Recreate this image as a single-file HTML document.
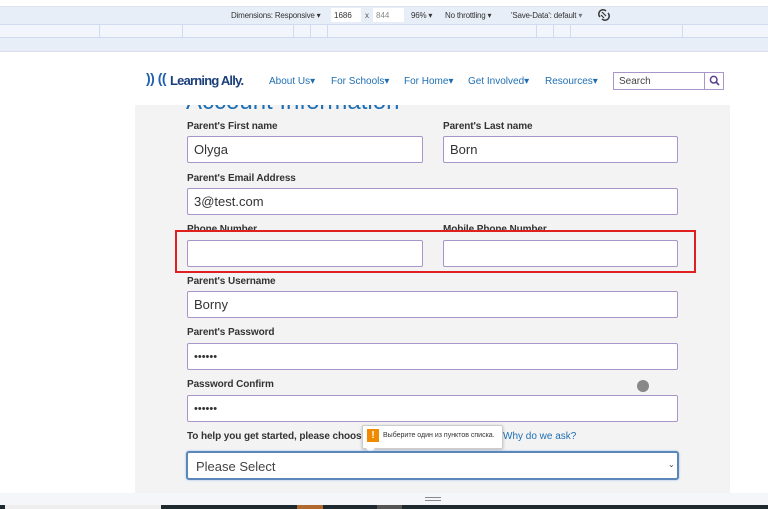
<!DOCTYPE html>
<html><head><meta charset="utf-8"><style>
*{margin:0;padding:0;box-sizing:border-box}
body{width:768px;height:509px;overflow:hidden;background:#fff;font-family:"Liberation Sans",sans-serif;position:relative}
.a{position:absolute}
.lbl{position:absolute;font-size:10px;font-weight:bold;color:#333;letter-spacing:-0.1px}
.in{position:absolute;height:27px;background:#fff;border:1px solid #a995c9;border-radius:2px;font-size:13px;color:#333;padding:6px 6px;line-height:14px}
.nav{position:absolute;top:76px;font-size:10px;color:#1f6fb2}
.dt{position:absolute;top:11px;font-size:8px;color:#333;letter-spacing:-0.2px}
</style></head><body>
<div class="a" style="left:0;top:6px;width:768px;height:18px;background:#e8eef8;border-top:1px solid #dde4ee"></div>
<div class="dt" style="left:231px">Dimensions: Responsive ▾</div>
<div class="a" style="left:331px;top:8px;width:30px;height:14px;background:#fff;font-size:8px;padding:3px 3px;color:#333">1686</div>
<div class="dt" style="left:365px;color:#555">x</div>
<div class="a" style="left:373px;top:8px;width:31px;height:14px;background:#fff;font-size:8px;padding:3px 3px;color:#888">844</div>
<div class="dt" style="left:411px">96% ▾</div>
<div class="dt" style="left:445px">No throttling ▾</div>
<div class="dt" style="left:511px">'Save-Data': default <span style="color:#777">▾</span></div>
<svg class="a" style="left:597px;top:8px" width="14" height="14" viewBox="0 0 14 14"><path d="M3 9 A4 4 0 0 1 9 3 M11 5 A4 4 0 0 1 5 11" stroke="#333" stroke-width="1.5" fill="none"/><path d="M5 4 L9 8 M4 7 l3 3" stroke="#333" stroke-width="1.2"/></svg>
<div class="a" style="left:0;top:24px;width:768px;height:14px;background:#f2f6fc;border-top:1px solid #cfdcf0;border-bottom:1px solid #cfdcf0"></div>
<div class="a" style="left:99px;top:25px;width:1px;height:12px;background:#cfdcf0"></div>
<div class="a" style="left:182px;top:25px;width:1px;height:12px;background:#cfdcf0"></div>
<div class="a" style="left:293px;top:25px;width:1px;height:12px;background:#cfdcf0"></div>
<div class="a" style="left:310px;top:25px;width:1px;height:12px;background:#cfdcf0"></div>
<div class="a" style="left:327px;top:25px;width:1px;height:12px;background:#cfdcf0"></div>
<div class="a" style="left:536px;top:25px;width:1px;height:12px;background:#cfdcf0"></div>
<div class="a" style="left:553px;top:25px;width:1px;height:12px;background:#cfdcf0"></div>
<div class="a" style="left:570px;top:25px;width:1px;height:12px;background:#cfdcf0"></div>
<div class="a" style="left:682px;top:25px;width:1px;height:12px;background:#cfdcf0"></div>
<div class="a" style="left:0;top:38px;width:768px;height:14px;background:#e8eef8;border-bottom:1px solid #dde"></div>

<div class="a" style="left:135px;top:96px;width:595px;height:397px;background:#f3f3f3"></div>
<div class="a" style="left:186px;top:89px;font-size:24px;color:#1f6fb2;line-height:26px">Account Information</div>
<div class="a" style="left:0;top:53px;width:768px;height:52px;background:#fff"></div>
<div class="a" style="left:146px;top:70px;font-size:14px;color:#1f5fb0;font-weight:bold;letter-spacing:-0.5px">)) ((</div>
<div class="a" style="left:170px;top:73px;font-size:13px;color:#1b3f7a;font-weight:bold;letter-spacing:-0.8px">Learning Ally.</div>
<div class="nav" style="left:269px">About Us▾</div>
<div class="nav" style="left:331px">For Schools▾</div>
<div class="nav" style="left:404px">For Home▾</div>
<div class="nav" style="left:468px">Get Involved▾</div>
<div class="nav" style="left:545px">Resources▾</div>
<div class="a" style="left:613px;top:72px;width:111px;height:18px;border:1px solid #a995c9;background:#fff"></div>
<div class="a" style="left:619px;top:76px;font-size:10px;color:#444">Search</div>
<div class="a" style="left:704px;top:72px;width:1px;height:18px;background:#a995c9"></div>
<svg class="a" style="left:709px;top:75px" width="11" height="11" viewBox="0 0 11 11"><circle cx="4.7" cy="4.7" r="3.3" stroke="#5b3f8f" stroke-width="1.5" fill="none"/><path d="M7 7 L10 10" stroke="#5b3f8f" stroke-width="1.6"/></svg>

<div class="lbl" style="left:187px;top:121px">Parent's First name</div>
<div class="lbl" style="left:443px;top:121px">Parent's Last name</div>
<div class="in" style="left:187px;top:136px;width:236px">Olyga</div>
<div class="in" style="left:443px;top:136px;width:235px">Born</div>
<div class="lbl" style="left:187px;top:173px">Parent's Email Address</div>
<div class="in" style="left:187px;top:188px;width:491px">3@test.com</div>
<div class="lbl" style="left:187px;top:224px">Phone Number</div>
<div class="lbl" style="left:443px;top:224px">Mobile Phone Number</div>
<div class="in" style="left:187px;top:240px;width:236px"></div>
<div class="in" style="left:443px;top:240px;width:235px"></div>
<div class="a" style="left:175px;top:230px;width:521px;height:43px;border:2px solid #e02020"></div>
<div class="lbl" style="left:187px;top:276px">Parent's Username</div>
<div class="in" style="left:187px;top:291px;width:491px">Borny</div>
<div class="lbl" style="left:187px;top:327px">Parent's Password</div>
<div class="in" style="left:187px;top:343px;width:491px;font-size:11px">••••••</div>
<div class="lbl" style="left:187px;top:379px">Password Confirm</div>
<div class="in" style="left:187px;top:395px;width:491px;font-size:11px">••••••</div>
<div class="a" style="left:637px;top:380px;width:12px;height:12px;border-radius:50%;background:#888"></div>
<div class="lbl" style="left:187px;top:431px">To help you get started, please choose w</div>
<div class="a" style="left:503px;top:431px;font-size:10px;color:#1f6fb2">Why do we ask?</div>
<div class="a" style="left:362px;top:425px;width:141px;height:24px;background:#fff;border:1px solid #ccc;border-radius:2px;box-shadow:0 1px 3px rgba(0,0,0,.25)"></div>
<div class="a" style="left:367px;top:446px;width:7px;height:7px;background:#fff;transform:rotate(45deg);border-right:1px solid #ccc;border-bottom:1px solid #ccc"></div>
<div class="a" style="left:367px;top:429px;width:12px;height:13px;background:#f08a00;color:#fff;font-size:10px;font-weight:bold;text-align:center;line-height:13px">!</div>
<div class="a" style="left:383px;top:432px;font-size:7px;color:#333">Выберите один из пунктов списка.</div>
<div class="a" style="left:186px;top:451px;width:493px;height:29px;background:#fff;border:2px solid #5b86b8;border-radius:3px;box-shadow:0 0 2px #9cc0e8"></div>
<div class="a" style="left:196px;top:459px;font-size:13px;color:#444">Please Select</div>
<div class="a" style="left:668px;top:460px;font-size:8px;color:#444">⌄</div>
<div class="a" style="left:0;top:493px;width:768px;height:12px;background:#f4f6f9"></div>
<div class="a" style="left:425px;top:497px;width:16px;height:1px;background:#888"></div>
<div class="a" style="left:425px;top:500px;width:16px;height:1px;background:#888"></div>
<div class="a" style="left:0;top:505px;width:768px;height:4px;background:#1f2a30"></div>
<div class="a" style="left:5px;top:505px;width:156px;height:4px;background:#eee"></div>
<div class="a" style="left:297px;top:505px;width:26px;height:4px;background:#b06a30"></div>
<div class="a" style="left:377px;top:505px;width:25px;height:4px;background:#555"></div>
</body></html>
